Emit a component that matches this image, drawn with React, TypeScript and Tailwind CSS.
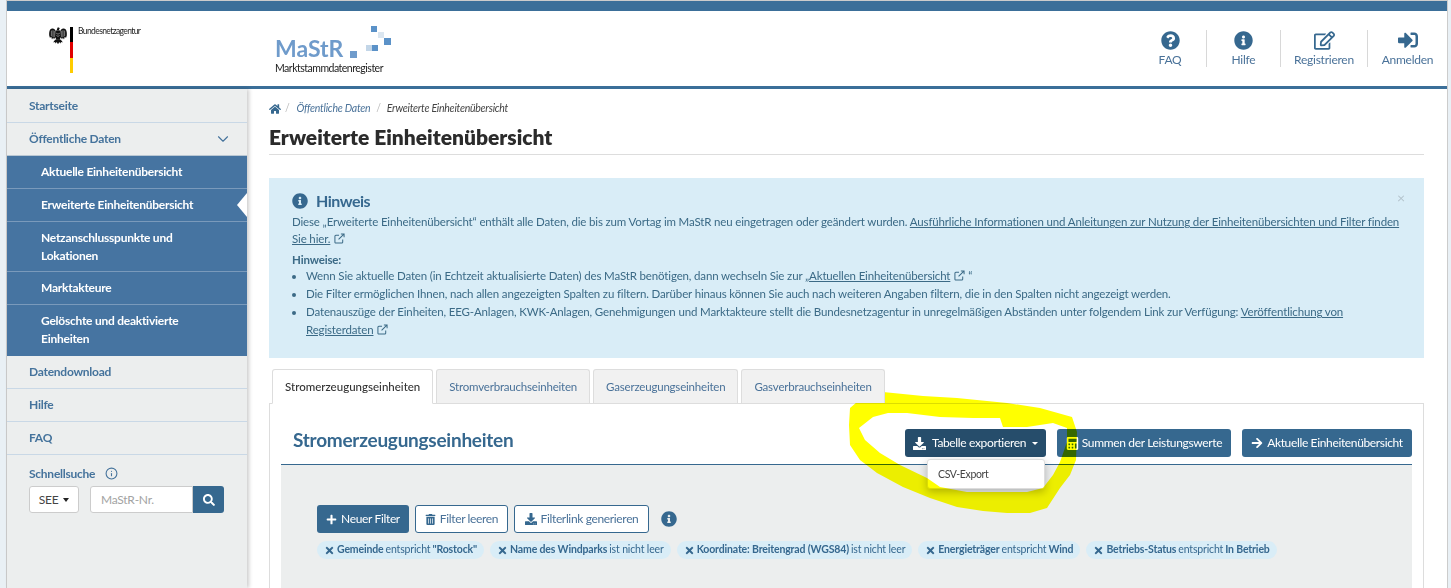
import { FaArrowRight, FaCalculator, FaDownload, FaHome, FaInfoCircle, FaPlus, FaQuestionCircle, FaRegEdit, FaSearch, FaSignInAlt, FaTimes, FaTrashAlt } from 'react-icons/fa';
import { LuChevronDown, LuInfo } from 'react-icons/lu';

const navBefore = ['Startseite'];
const subItems = [
  { label: 'Aktuelle Einheitenübersicht' },
  { label: 'Erweiterte Einheitenübersicht', active: true },
  { label: 'Netzanschlusspunkte und Lokationen' },
  { label: 'Marktakteure' },
  { label: 'Gelöschte und deaktivierte Einheiten' },
];
const navAfter = ['Datendownload', 'Hilfe', 'FAQ'];

const tabs = ['Stromerzeugungseinheiten', 'Stromverbrauchseinheiten', 'Gaserzeugungseinheiten', 'Gasverbrauchseinheiten'];

const chips = [
  { name: 'Gemeinde', rest: 'entspricht', value: '"Rostock"' },
  { name: 'Name des Windparks', rest: 'ist nicht leer', value: '' },
  { name: 'Koordinate: Breitengrad (WGS84)', rest: 'ist nicht leer', value: '' },
  { name: 'Energieträger', rest: 'entspricht', value: 'Wind' },
  { name: 'Betriebs-Status', rest: 'entspricht', value: 'In Betrieb' },
];

const ExtLink = () => (
  <svg viewBox="0 0 12 12" className="inline-block w-[11px] h-[11px] ml-1 align-[-1px]" fill="none" stroke="currentColor" strokeWidth="1.1">
    <path d="M9.5 7v3a1 1 0 0 1-1 1H2a1 1 0 0 1-1-1V3.5a1 1 0 0 1 1-1h3.5" />
    <path d="M5 7l5.5-5.5M7.5 1h3.5v3.5" />
  </svg>
);

const Eagle = () => (
  <svg viewBox="0 0 18 17" className="w-[18px] h-[17px] mt-[1px]">
    <g fill="#111">
      <path d="M8 2.2 L8.6 .4 L10 .4 L10.8 1.4 L10 2.2 L10.4 3.6 H7.6Z" />
      <path d="M6.4 3.4 H11.6 L12 10 L10.6 12.4 H7.4 L6 10Z" />
      <path d="M6.2 3 C4.8 1.2 2.6 1 1.2 2.6 C.2 4 0 6.4 .2 8.4 L1 11 L2.2 9.6 L3 12.4 L4.2 10.6 L5 12.6 L6.4 9.6Z" />
      <path d="M11.8 3 C13.2 1.2 15.4 1 16.8 2.6 C17.8 4 18 6.4 17.8 8.4 L17 11 L15.8 9.6 L15 12.4 L13.8 10.6 L13 12.6 L11.6 9.6Z" />
      <path d="M7 12.2 L5 14 L4.4 15.6 L6 15 L6.6 16.4 L7.8 15 L8.6 16.8 H9.4 L10.2 15 L11.4 16.4 L12 15 L13.6 15.6 L13 14 L11 12.2Z" />
    </g>
    <g stroke="#fff" strokeWidth=".45" fill="none">
      <path d="M2.4 3.6 V9 M4 3.2 V10 M5.3 3.8 V10" />
      <path d="M15.6 3.6 V9 M14 3.2 V10 M12.7 3.8 V10" />
      <path d="M7.2 6.2 L9 7.2 L10.8 6.2 M7.4 8.4 L9 9.4 L10.6 8.4" />
    </g>
  </svg>
);

const Highlight = () => (
  <svg className="absolute left-0 top-0 w-[1451px] h-[588px] pointer-events-none mix-blend-multiply" viewBox="0 0 1451 588">
    <path
      fillRule="evenodd"
      fill="#ffff00"
      d="M883 392 L870 395 L857 402 L850 408 L849 425 L850 445 L860 460 L877 473 L903 487 L930 498 L957 507 L983 511 L1007 513 L1030 513 L1047 508 L1060 488 L1070 475 L1076 460 L1077 432 L1072 417 L1040 408 L1007 403 L957 398 L923 396 Z
         M888 413 L873 417 L859 428 L865 440 L880 453 L900 465 L927 478 L940 487 L967 492 L1027 492 L1043 488 L1053 475 L1060 462 L1067 442 L1067 428 L1053 423 L1027 427 L1003 427 L1000 418 L973 418 L940 417 L907 413 Z"
    />
  </svg>
);

const HeaderLink = ({ icon, label, width, last }: { icon: React.ReactNode; label: string; width: string; last?: boolean }) => (
  <div className={`flex flex-col items-center justify-between h-[37px] ${width} ${last ? '' : 'border-r border-[#d8d8d8]'}`}>
    <div className="text-[#36688f] h-[20px] flex items-center">{icon}</div>
    <span className="text-[12px] leading-[14px] text-[#4a7299]">{label}</span>
  </div>
);

const Sidebar = () => (
  <aside className="w-[240px] shrink-0 bg-[#eceeee] shadow-[2px_0_4px_rgba(0,0,0,0.2)] relative z-10 h-[499px]">
    {navBefore.map((item) => (
      <div key={item} className="h-[34px] flex items-center pl-[22px] border-b border-[#c9d8e6] text-[12px] font-bold text-[#45739c]">
        {item}
      </div>
    ))}
    <div className="h-[33px] flex items-center justify-between pl-[22px] pr-[15px] border-b border-[#b9c7d3] text-[12px] font-bold text-[#45739c]">
      Öffentliche Daten
      <LuChevronDown className="text-[18px] stroke-[1.5]" />
    </div>
    <div className="bg-[#4674a1] pb-[2px]">
      {subItems.map((item) => (
        <div
          key={item.label}
          className="relative flex items-center min-h-[33px] py-[7px] pl-[34px] pr-[30px] border-b border-[#7a9abb] last:border-b-0 text-[12px] leading-[17.5px] font-bold text-white"
        >
          {item.label}
          {item.active && (
            <span className="absolute right-0 top-[4px] w-0 h-0 border-y-[12px] border-y-transparent border-r-[10px] border-r-white" />
          )}
        </div>
      ))}
    </div>
    {navAfter.map((item) => (
      <div key={item} className="h-[33px] flex items-center pl-[22px] border-b border-[#c9d8e6] text-[12px] font-bold text-[#45739c]">
        {item}
      </div>
    ))}
    <div className="pl-[22px] pt-[10px]">
      <div className="flex items-center gap-[10px] text-[12px] font-bold text-[#45739c] h-[17px]">
        Schnellsuche
        <LuInfo className="text-[13px]" />
      </div>
      <div className="flex mt-[4px] h-[27px] text-[12px]">
        <div className="w-[50px] bg-white border border-[#cccccc] rounded-[3px] flex items-center justify-center gap-[5px] text-[#444]">
          SEE
          <span className="w-0 h-0 border-x-[3px] border-x-transparent border-t-[4px] border-t-[#222]" />
        </div>
        <div className="ml-[11px] w-[103px] bg-white border border-[#cccccc] rounded-l-[3px] flex items-center pl-[10px] text-[#a3a3a3]">
          MaStR-Nr.
        </div>
        <div className="w-[31px] bg-[#36688f] rounded-r-[3px] flex items-center justify-center text-white">
          <FaSearch className="text-[12px]" />
        </div>
      </div>
    </div>
  </aside>
);

const Hint = () => (
  <div className="relative mt-[23px] h-[180px] bg-[#d9edf7] pl-[23px] pr-[20px] pt-[13px] text-[11.5px] leading-[17px] tracking-[-0.15px] text-[#3b6a86]">
    <div className="flex items-center gap-[8px] text-[#36688f]">
      <FaInfoCircle className="text-[16px]" />
      <span className="text-[16px] leading-[20px] font-bold tracking-[-0.5px]">Hinweis</span>
    </div>
    <span className="absolute right-[19px] top-[11px] text-[14px] text-[#b4c4cd]">×</span>
    <p className="mt-[2px]">
      Diese „Erweiterte Einheitenübersicht“ enthält alle Daten, die bis zum Vortag im MaStR neu eingetragen oder geändert wurden.{' '}
      <span className="underline">Ausführliche Informationen und Anleitungen zur Nutzung der Einheitenübersichten und Filter finden Sie hier.</span>
      <ExtLink />
    </p>
    <p className="mt-[5px] font-bold leading-[15px]">Hinweise:</p>
    <ul className="list-disc pl-[14px] leading-[18px]">
      <li>
        Wenn Sie aktuelle Daten (in Echtzeit aktualisierte Daten) des MaStR benötigen, dann wechseln Sie zur <span className="underline">„Aktuellen Einheitenübersicht</span>
        <ExtLink /> “
      </li>
      <li>Die Filter ermöglichen Ihnen, nach allen angezeigten Spalten zu filtern. Darüber hinaus können Sie auch nach weiteren Angaben filtern, die in den Spalten nicht angezeigt werden.</li>
      <li>
        Datenauszüge der Einheiten, EEG-Anlagen, KWK-Anlagen, Genehmigungen und Marktakteure stellt die Bundesnetzagentur in unregelmäßigen Abständen unter folgendem Link zur Verfügung:{' '}
        <span className="underline">Veröffentlichung von Registerdaten</span>
        <ExtLink />
      </li>
    </ul>
  </div>
);

const Tabs = () => (
  <div className="flex gap-[3px] pl-[3px] mt-[11px] h-[34px] relative z-[1]">
    {tabs.map((tab, i) => (
      <div
        key={tab}
        className={`px-[12px] flex items-center text-[11.5px] border border-[#dddddd] rounded-t-[3px] ${
          i === 0 ? 'bg-white border-b-white h-[35px] text-[#333] font-medium tracking-normal' : 'bg-[#f1f1f1] text-[#4a7299] border-b-0 tracking-[-0.2px]'
        }`}
      >
        {tab}
      </div>
    ))}
  </div>
);

const ExportButtons = () => (
  <div className="flex gap-[11px] text-[12px] tracking-[-0.35px] text-white">
    <div className="relative">
      <div className="h-[28px] w-[141px] bg-[#264d6b] rounded-[3px] flex items-center justify-center gap-[6px]">
        <FaDownload className="text-[13px]" />
        <span>Tabelle exportieren</span>
        <span className="w-0 h-0 border-x-[3px] border-x-transparent border-t-[3px] border-t-white" />
      </div>
      <div className="absolute left-[22px] top-[30px] w-[118px] h-[30px] pt-[2px] bg-white rounded-[3px] border border-[#dddddd] shadow-[0_3px_8px_rgba(0,0,0,0.25)] flex items-center pl-[10px] text-[#444] text-[10.5px]">
        CSV-Export
      </div>
    </div>
    <div className="h-[28px] w-[174px] bg-[#36688f] rounded-[3px] flex items-center justify-center gap-[3px]">
      <FaCalculator className="text-[13px]" />
      <span>Summen der Leistungswerte</span>
    </div>
    <div className="h-[28px] w-[170px] bg-[#36688f] rounded-[3px] flex items-center justify-center gap-[4px]">
      <FaArrowRight className="text-[12px]" />
      <span>Aktuelle Einheitenübersicht</span>
    </div>
  </div>
);

const FilterBar = () => (
  <div className="bg-[#eceeee] h-[200px] pl-[36px] pt-[40px]">
    <div className="flex items-center gap-[6px] text-[12px] tracking-[-0.35px]">
      <div className="h-[28px] w-[92px] bg-[#36688f] text-white rounded-[3px] flex items-center justify-center gap-[4px]">
        <FaPlus className="text-[11px]" />
        Neuer Filter
      </div>
      <div className="h-[28px] w-[93px] bg-white border border-[#36688f] text-[#4a7299] rounded-[3px] flex items-center justify-center gap-[4px]">
        <FaTrashAlt className="text-[11px] text-[#36688f]" />
        Filter leeren
      </div>
      <div className="h-[28px] w-[135px] bg-white border border-[#36688f] text-[#4a7299] rounded-[3px] flex items-center justify-center gap-[4px]">
        <FaDownload className="text-[12px] text-[#36688f]" />
        Filterlink generieren
      </div>
      <FaInfoCircle className="ml-[6px] text-[16px] text-[#36688f]" />
    </div>
    <div className="flex gap-[6px] mt-[8px]">
      {chips.map((chip) => (
        <div key={chip.name} className="h-[18px] rounded-[9px] bg-[#d9edf7] px-[7px] flex items-center gap-[2px] text-[10.5px] tracking-[-0.15px] text-[#36688f] whitespace-nowrap">
          <FaTimes className="text-[11px]" />
          <span className="font-bold">{chip.name}</span>
          <span>{chip.rest}</span>
          {chip.value && <span className="font-bold">{chip.value}</span>}
        </div>
      ))}
    </div>
  </div>
);

const App = () => {
  return (
    <div className="relative w-[1451px] h-[588px] overflow-hidden bg-[#e9f0f5] pl-[7px] pr-[4px] pt-[1px] tracking-[-0.25px] [font-family:Lato,sans-serif]">
      <div className="h-full bg-white flex flex-col shadow-[0_0_0_1px_#cccccc]">
        <div className="h-[10px] bg-[#3b6f99] shrink-0" />
        <header className="h-[78px] shrink-0 border-b-[3px] border-[#3b6f99] flex">
          <div className="w-[268px] shrink-0 pl-[42px] pt-[15px] flex items-start">
            <Eagle />
            <div className="ml-[3px] mt-[1px] w-[3px] h-[46px] flex flex-col">
              <div className="flex-1 bg-black" />
              <div className="flex-1 bg-[#e00000]" />
              <div className="flex-1 bg-[#ffcc00]" />
            </div>
            <span className="ml-[5px] text-[8.5px] leading-[10px] tracking-[-0.6px] text-[#222]">Bundesnetzagentur</span>
          </div>
          <div className="pt-[22px]">
            <div className="flex items-start">
              <span className="w-[72px] text-[23px] leading-[30px] font-bold tracking-normal text-[#6f9bcb]">MaStR</span>
              <svg viewBox="0 0 46 36" className="-mt-[7px] w-[46px] h-[36px]">
                <rect x="3" y="25" width="7" height="7" fill="#6f9bcb" />
                <rect x="24" y="0" width="6" height="6" fill="#5b92c8" />
                <rect x="31" y="6" width="6" height="6" fill="#dbe6f0" />
                <rect x="37" y="12" width="7" height="7" fill="#5b92c8" />
                <rect x="19" y="19" width="6" height="6" fill="#c3d6e8" />
                <rect x="25" y="19" width="6" height="6" fill="#5b92c8" />
              </svg>
            </div>
            <div className="text-[10.5px] leading-[12px] -mt-[1px] tracking-[-0.5px] text-[#222]">Marktstammdatenregister</div>
          </div>
          <nav className="ml-auto flex pt-[19px]">
            <HeaderLink icon={<FaQuestionCircle className="text-[19px]" />} label="FAQ" width="w-[73px]" />
            <HeaderLink icon={<FaInfoCircle className="text-[19px]" />} label="Hilfe" width="w-[74px]" />
            <HeaderLink icon={<FaRegEdit className="text-[21px]" />} label="Registrieren" width="w-[87px]" />
            <HeaderLink icon={<FaSignInAlt className="text-[20px]" />} label="Anmelden" width="w-[79px]" last />
          </nav>
        </header>
        <div className="flex flex-1 min-h-0">
          <Sidebar />
          <main className="flex-1 pl-[22px] pr-[23px]">
            <div className="pt-[13px] flex items-center gap-[4px] h-[26px] text-[10.5px] italic text-[#4a7299]">
              <FaHome className="text-[12px] text-[#36688f]" />
              <span className="text-[#bbb] not-italic">/</span>
              <span className="ml-[3px]">Öffentliche Daten</span>
              <span className="text-[#bbb] not-italic mx-[2px]">/</span>
              <span className="text-[#444]">Erweiterte Einheitenübersicht</span>
            </div>
            <h1 className="mt-[9px] h-[31px] border-b border-[#dddddd] text-[21px] leading-[26px] font-extrabold tracking-normal text-[#2b2b2b]">Erweiterte Einheitenübersicht</h1>
            <Hint />
            <Tabs />
            <section className="border border-[#dddddd] bg-white px-[11px]">
              <div className="h-[61px] flex items-start justify-between border-b border-[#36688f]">
                <h2 className="pl-[12px] pt-[23px] text-[19px] leading-[25px] font-bold text-[#36688f]">Stromerzeugungseinheiten</h2>
                <div className="pt-[25px]">
                  <ExportButtons />
                </div>
              </div>
              <FilterBar />
            </section>
          </main>
        </div>
      </div>
      <Highlight />
    </div>
  );
};

export default App;
